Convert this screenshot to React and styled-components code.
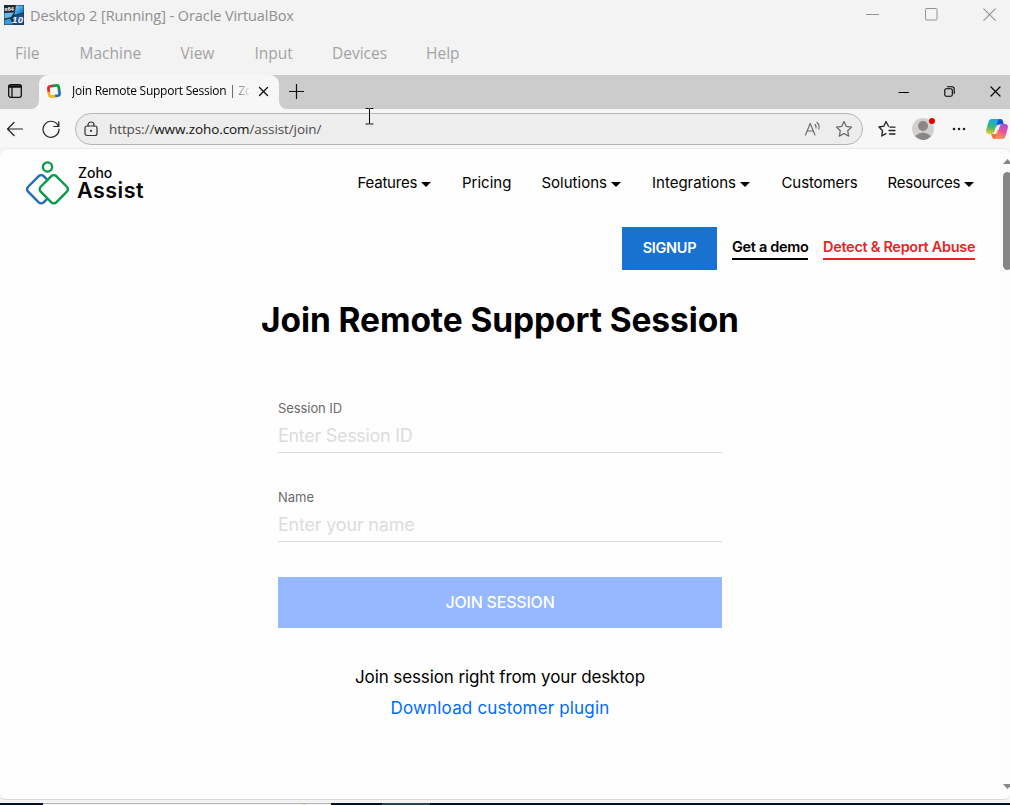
import React from "react";
import styled, { createGlobalStyle } from "styled-components";

const Global = createGlobalStyle`
  * { box-sizing: border-box; }
  body { margin: 0; overflow: hidden; background: #f3f3f3; }
`;
const ui = `"Open Sans", "Noto Sans", sans-serif`;
const Screen = styled.div`
  position: relative; width: 1010px; height: 805px; overflow: hidden;
  display: flex; flex-direction: column; background: #f3f3f3; font-family: ${ui};
  svg { display: block; flex: none; }
`;
const TitleBar = styled.header`
  display: flex; align-items: center; height: 31px; padding: 0 14px 1px 4px; gap: 6px;
`;
const Title = styled.span`
  flex: 1; font-size: 14.5px; line-height: 20px; color: #8f8f8f; white-space: nowrap;
  letter-spacing: ${(p) => p.$ls}px; padding-top: 2px;
`;
const WindowButtons = styled.div`
  display: flex; align-items: center; gap: ${(p) => p.$gap}px; padding-bottom: ${(p) => p.$lift || 0}px;
`;
const MenuBar = styled.nav`
  display: flex; height: 44px; padding: 0 0 0 15px; align-items: center;
`;
const MenuItem = styled.span`
  width: ${(p) => p.$w}px; font-size: 15.5px; color: #a3a3a3;
`;
const TabStrip = styled.div`
  display: flex; height: 34px; background: #cccccc; align-items: center;
`;
const LeftStrip = styled.div`height: 34px; background: #f7f7f7;`;
const TabMenu = styled.div`
  width: 39px; padding-left: 8px; height: 100%; display: flex; align-items: center;
  background: #ccc; border-bottom-right-radius: 8px; padding-bottom: 2px;
`;
const Tab = styled.div`
  width: 240px; height: 34px; background: #f7f7f7; border-radius: 9px 9px 0 0; display: flex; align-items: center;
  padding: 0 9px 2px 7px;
`;
const TabTitle = styled.span`
  width: 177px; margin: 0 9px 0 10px; overflow: hidden; white-space: nowrap; font-size: 12px; color: #000;
  letter-spacing: -0.25px; line-height: 20px;
  mask-image: linear-gradient(90deg, #000 86%, transparent 102%);
`;
const RestStrip = styled.div`flex: 1; height: 34px; background: #f7f7f7;`;
const Rest = styled.div`
  height: 34px; background: #ccc; border-bottom-left-radius: 8px; display: flex; align-items: center;
  justify-content: space-between; padding: 0 9px 1px 10px;
`;
const Toolbar = styled.div`
  display: flex; height: 39px; background: #f7f7f7; align-items: center; padding: 1px 0 0 6px; flex: none;
`;
const NavButtons = styled.div`display: flex; align-items: center; gap: 18px;`;
const Address = styled.div`
  display: flex; align-items: center; width: 788px; height: 32px; margin: 0 15px 0 15px; padding: 0 9px 0 8px;
  border: 1px solid #b5b5b5; border-radius: 16px; background: #ededed;
`;
const Url = styled.span`
  flex: 1; margin: 0 0 1px 11px; font-size: 13.5px; color: #4b4b4b; letter-spacing: ${(p) => p.$ls}px;
  b { font-weight: 400; color: #111; }
`;
const Actions = styled.div`display: flex; align-items: center; gap: ${(p) => p.$gap}px;`;
const Page = styled.main`
  display: flex; height: 652px; background: #fefefe; border-top: 1px solid #e9e9e9; border-bottom: 1px solid #d6d8d8;
  border-radius: 8px 8px 6px 6px; font-family: Inter, sans-serif; overflow: hidden; flex: none;
`;
const Content = styled.div`width: 1000px; height: 100%; display: flex; flex-direction: column; align-items: center;`;
const SiteHeader = styled.div`width: 100%; height: 67px; display: flex; padding: 11px 0 0 24px;`;
const Brand = styled.div`width: 333.5px; display: flex; gap: 7px;`;
const BrandText = styled.div`display: flex; flex-direction: column; color: #060606; padding-top: 5px;`;
const BrandSmall = styled.span`font-size: 14px; line-height: 15px; font-weight: 500; letter-spacing: 0; margin-left: 1px;`;
const BrandLarge = styled.span`font-size: 21.5px; line-height: 21px; font-weight: 600; letter-spacing: ${(p) => p.$ls}px;`;
const Nav = styled.nav`display: flex; padding-top: 13px;`;
const NavItem = styled.a`
  width: ${(p) => p.$w}px; display: flex; gap: 4px; font-size: 15px; line-height: 20px; color: #000; white-space: nowrap;
  letter-spacing: ${(p) => p.$ls}px;
`;
const Caret = styled.i`
  width: 0; height: 0; margin-top: 9px; border: 5px solid transparent; border-top-color: #000; border-bottom: 0;
`;
const Ctas = styled.div`width: 100%; padding: 11px 25px 0 0; display: flex; justify-content: flex-end; gap: 15px; height: 54px;`;
const Signup = styled.button`
  width: 95px; height: 43px; border: 0; background: #1971d0; color: #fff; font: 600 14.5px/20px Inter, sans-serif;
  letter-spacing: ${(p) => p.$ls}px; padding: 0 0 2px;
`;
const CtaLink = styled.a`
  width: ${(p) => p.$w}px; height: 33px; padding-top: 10px; color: ${(p) => p.$c}; border-bottom: 2px solid ${(p) => p.$c};
  font-size: 14.5px; line-height: 20px; font-weight: 600; letter-spacing: ${(p) => p.$ls}px; white-space: nowrap;
`;
const Heading = styled.h1`
  margin: 28px 0 58px; font-size: 33.5px; line-height: 44px; font-weight: 700; color: #000; white-space: nowrap;
  letter-spacing: ${(p) => p.$ls}px;
`;
const Field = styled.label`
  width: 444px; height: 53px; margin-bottom: 36px; display: flex; flex-direction: column; border-bottom: 1px solid #d9d9d9;
`;
const FieldLabel = styled.span`font-size: 13px; line-height: 16px; color: #6b6b6b; letter-spacing: ${(p) => p.$ls}px;`;
const Placeholder = styled.span`
  font-size: 18px; line-height: 24px; margin-top: 8px; color: #dcdcdc; letter-spacing: ${(p) => p.$ls}px;
`;
const Join = styled.button`
  width: 444px; height: 51px; margin: -1px 0 37px; border: 0; background: #95b8ff; color: #fff; padding: 0 0 1px;
  font: 500 16px/20px Inter, sans-serif; letter-spacing: ${(p) => p.$ls}px;
`;
const Note = styled.span`
  font-size: 17px; line-height: 24px; margin-bottom: 7px; color: ${(p) => p.$c}; letter-spacing: ${(p) => p.$ls}px;
`;
const Scroll = styled.div`
  width: 10px; flex: none; padding: 10px 0 10px 3px; background: #fcfcfc; display: flex; flex-direction: column; height: 100%;
  justify-content: space-between; overflow: hidden;
`;
const ScrollTop = styled.div`display: flex; flex-direction: column; gap: 8px;`;
const Thumb = styled.div`width: 9px; height: 98px; border-radius: 5px; background: #868686;`;
const Taskbar = styled.div`
  height: 2px; margin-top: 3px; display: flex; background: #02101d;
`;
const TaskPart = styled.span`width: ${(p) => p.$w}px; height: 2px; background: ${(p) => p.$c}; border-top: 1px solid ${(p) => p.$t || p.$c};`;
const Pointer = styled.div`position: absolute; left: 364px; top: 108px;`;

const Line = ({ w = 20, h = 20, c = "#222", s = 1.2, children }) => (
  <svg width={w} height={h} viewBox={`0 0 ${w} ${h}`} fill="none" stroke={c} strokeWidth={s} strokeLinecap="round" strokeLinejoin="round">{children}</svg>
);

const VmIcon = () => (
  <svg width="20" height="20" viewBox="0 0 20 20">
    <defs><linearGradient id="vm" x1="0" y1="0" x2="1" y2="1"><stop stopColor="#8fd8fa" /><stop offset=".5" stopColor="#3ba0e6" /><stop offset="1" stopColor="#155a9c" /></linearGradient></defs>
    <rect width="20" height="20" fill="#22303c" />
    <path d="M.5 8 10 7.500 7 12 .5 13.500Z" fill="#62bcef" />
    <path d="M12 .5h7.500v7L10.500 10Z" fill="url(#vm)" />
    <path d="M.5 15 6 13.500 9 19.500H.5Z" fill="#3a9adb" />
    <path d="M10.500 11l9-2.500V19.500H10.500L8 14Z" fill="#1c4f88" />
    <rect y=".5" width="10" height="6.500" fill="#20242a" />
    <text x="0.3" y="6" fontSize="6" fontWeight="700" fill="#fff" fontFamily="Liberation Sans, sans-serif" textLength="9.5">x64</text>
    <text x="8" y="17.500" fontSize="9.500" fontWeight="700" fontStyle="italic" fill="#fff" fontFamily="Liberation Sans, sans-serif" textLength="11">10</text>
  </svg>
);

const Copilot = () => (
  <svg width="22" height="20" viewBox="0 0 22 20">
    <defs>
      <linearGradient id="ca" x1="0.4" y1="0" x2="0.2" y2="1"><stop stopColor="#1ba7ee" /><stop offset=".5" stopColor="#35b878" /><stop offset="1" stopColor="#f3cb22" /></linearGradient>
      <linearGradient id="cb" x1="0.7" y1="0" x2="0.3" y2="1"><stop stopColor="#a64de8" /><stop offset=".5" stopColor="#ee5590" /><stop offset="1" stopColor="#ff9a57" /></linearGradient>
    </defs>
    <path d="M10 0h4.500c1.500 0 2 .8 2.400 2l1 3.500h-4.500c-2 0-2.500 1-3 2.500Z" fill="#1257d2" />
    <path d="M5 15h5l2-5.500-1 9c-.4 1-1 1.500-2.500 1.500-1.500 0-2-.8-2.400-2Z" fill="#f8763d" />
    <path d="M5.500 0H14c-1.500 0-2 1-2.500 2.500L8.500 12c-.6 2-1.300 3-3.300 3H3c-2.500 0-3.500-2-2.600-5L2.500 3C3.100 1 4 0 5.500 0Z" fill="url(#ca)" />
    <path d="M16.500 20H8c1.500 0 2-1 2.500-2.500l3-9.500c.6-2 1.300-3 3.300-3H19c2.500 0 3.500 2 2.600 5l-2.100 7c-.6 2-1.500 3-3 3Z" fill="url(#cb)" />
  </svg>
);

const nav = [["Features", 104.5, -0.22, 1], ["Pricing", 79.5, 0, 0], ["Solutions", 110.5, 0, 1], ["Integrations", 129.5, 0, 1], ["Customers", 106, -0.1, 0], ["Resources", 90, -0.2, 1]];

export default function App() {
  return (
    <Screen>
      <Global />
      <TitleBar>
        <VmIcon />
        <Title $ls={-0.08}>Desktop 2 [Running] - Oracle VirtualBox</Title>
        <WindowButtons $gap={45.5} $lift={1}>
          <Line w={13} h={13} c="#929292" s={1}><path d="M0.500 6.500h12" /></Line>
          <Line w={13} h={13} c="#929292" s={1}><rect x=".5" y=".5" width="11.500" height="11.500" rx="1" /></Line>
          <Line w={13} h={13} c="#929292" s={1.1}><path d="m.8.8 11.500 11.500M12.300.8.8 12.300" /></Line>
        </WindowButtons>
      </TitleBar>
      <MenuBar>
        <MenuItem $w={64.5}>File</MenuItem><MenuItem $w={101}>Machine</MenuItem><MenuItem $w={74}>View</MenuItem>
        <MenuItem $w={77.5}>Input</MenuItem><MenuItem $w={94}>Devices</MenuItem><MenuItem $w={60}>Help</MenuItem>
      </MenuBar>
      <TabStrip>
        <LeftStrip><TabMenu>
          <Line w={14} h={14} c="#111" s={1.3}><rect x=".7" y=".7" width="12.600" height="12.600" rx="2" /><path d="M1 1.800h12M1 3h12M4 4v9" /></Line>
        </TabMenu></LeftStrip>
        <Tab>
          <svg width="16" height="16" viewBox="-1 -1 16 16" fill="none" strokeWidth="2.700">
            <g transform="rotate(-8 7 7)">
              <path d="M1.800 7.500V4Q1.800 1.800 4 1.800H7" stroke="#e42527" />
              <path d="M6.500 1.800H10Q12.200 1.800 12.200 4V7" stroke="#089949" />
              <path d="M12.200 6.500V10Q12.200 12.200 10 12.200H7" stroke="#226db4" />
              <path d="M7.500 12.200H4Q1.800 12.200 1.800 10V7" stroke="#f9b21d" />
            </g>
          </svg>
          <TabTitle>Join Remote Support Session | Zoho</TabTitle>
          <Line w={11} h={11} c="#111" s={1.3}><path d="m1.500 1.500 8 8M9.500 1.500l-8 8" /></Line>
        </Tab>
        <RestStrip><Rest>
          <WindowButtons $gap={0} $lift={1}><Line w={15} h={15} c="#111"><path d="M7.500.5v14M.5 7.500h14" /></Line></WindowButtons>
          <WindowButtons $gap={35}>
            <Line w={11} h={11} c="#000" s={1}><path d="M1 6.500h9.500" /></Line>
            <Line w={11} h={11} c="#000" s={1.1}><rect x=".8" y="2.800" width="7.500" height="7.500" rx="1.500" /><path d="M3.500.8H8a2 2 0 0 1 2.200 2V7.500" /></Line>
            <Line w={11} h={11} c="#000" s={1.2}><path d="m1 1 9 9M10 1l-9 9" /></Line>
          </WindowButtons>
        </Rest></RestStrip>
      </TabStrip>
      <Toolbar>
        <NavButtons>
          <Line w={18} h={16}><path d="M16.500 8H1.500M8 1.500 1.500 8 8 14.500" /></Line>
          <Line w={18} h={18}><path d="M16.500 6.500A8 8 0 1 0 17 9M16.800 1.500v5h-5" /></Line>
        </NavButtons>
        <Address>
          <Line w={14} h={16} c="#333"><rect x="1" y="5" width="12" height="9.500" rx="2" /><path d="M4 5V4a3 3 0 0 1 6 0v1" /><circle cx="7" cy="9.800" r=".5" fill="#333" /></Line>
          <Url $ls={-0.1}>https://<b>www.zoho.com</b>/assist/join/</Url>
          <Actions $gap={14}>
            <Line w={17} h={16} c="#666" s={1.1}><path d="M1.500 14 6.200 2.500 11 14M3.200 10h6M11 3.500q1.500 1.500 1 3.500M13 1.500q3 2.800 1.700 6.500" /></Line>
            <Line w={18} h={18} c="#666" s={1.2}><path d="m9 1.500 2.300 4.900 5.300.7-3.900 3.700 1 5.300L9 13.500l-4.700 2.600 1-5.300L1.400 7.100l5.300-.7Z" /></Line>
          </Actions>
        </Address>
        <Line w={18} h={18} s={1.3}><path d="M10.500 6.200 8 1.500 5.900 6.200 1 7l3.600 3.700-.9 5.300L8 13.600M12 7.200h5M11 10.500h6M11.500 14H17" /></Line>
        <Actions $gap={16}>
          <svg width="40" height="26" viewBox="-15 0 40 26">
            <circle cx="12" cy="13" r="11" fill="#d2d0ce" /><circle cx="12" cy="10" r="5" fill="#8a8886" /><path d="M4 20q8-7 16 0-7 8-16 0" fill="#8a8886" /><circle cx="21" cy="5" r="3" fill="#e00000" />
          </svg>
          <svg width="18" height="4" viewBox="0 0 18 4" fill="#222"><circle cx="2" cy="2" r="1.300" /><circle cx="7" cy="2" r="1.300" /><circle cx="12" cy="2" r="1.300" /></svg>
          <Copilot />
        </Actions>
      </Toolbar>
      <Page>
        <Content>
          <SiteHeader>
            <Brand>
              <svg width="46" height="46" viewBox="0 0 46 46" fill="none" strokeWidth="2.400">
                <rect x="6.200" y="18.200" width="22" height="22" rx="3.500" transform="rotate(45 17.200 29.200)" stroke="#226db4" />
                <rect x="18.800" y="18.200" width="22" height="22" rx="3.500" transform="rotate(45 29.800 29.200)" stroke="#089949" fill="#fefefe" />
                <circle cx="23.500" cy="7" r="4.600" stroke="#089949" />
              </svg>
              <BrandText><BrandSmall>Zoho</BrandSmall><BrandLarge $ls={0.5}>Assist</BrandLarge></BrandText>
            </Brand>
            <Nav>{nav.map(([t, w, ls, c]) => <NavItem key={t} $w={w} $ls={ls}>{t}{c ? <Caret /> : null}</NavItem>)}</Nav>
          </SiteHeader>
          <Ctas>
            <Signup $ls={-0.3}>SIGNUP</Signup>
            <CtaLink $w={76} $c="#000" $ls={-0.33}>Get a demo</CtaLink>
            <CtaLink $w={152} $c="#e42527" $ls={-0.3}>Detect &amp; Report Abuse</CtaLink>
          </Ctas>
          <Heading $ls={-0.1}>Join Remote Support Session</Heading>
          <Field><FieldLabel $ls={-0.08}>Session ID</FieldLabel><Placeholder $ls={-0.3}>Enter Session ID</Placeholder></Field>
          <Field><FieldLabel $ls={0}>Name</FieldLabel><Placeholder $ls={-0.2}>Enter your name</Placeholder></Field>
          <Join $ls={-0.2}>JOIN SESSION</Join>
          <Note $c="#000" $ls={-0.11}>Join session right from your desktop</Note>
          <Note $c="#006aff" $ls={0.17}>Download customer plugin</Note>
        </Content>
        <Scroll>
          <ScrollTop>
            <svg width="9" height="5" viewBox="0 0 9 5"><path d="M0 5 4.500 0 9 5Z" fill="#868686" /></svg>
            <Thumb />
          </ScrollTop>
          <svg width="9" height="5" viewBox="0 0 9 5"><path d="M0 0h9L4.500 5Z" fill="#868686" /></svg>
        </Scroll>
      </Page>
      <Taskbar>
        <TaskPart $w={43} $c="#02101d" /><TaskPart $w={260} $c="#f4f4f4" $t="#b5b5b5" /><TaskPart $w={3} $c="#f3d5b5" $t="#b5b5b5" /><TaskPart $w={25} $c="#f4f4f4" $t="#b5b5b5" />
        <TaskPart $w={51} $c="#02101d" /><TaskPart $w={48} $c="#2f414b" />
      </Taskbar>
      <Pointer><Line w={10} h={17} c="#000" s={1}><path d="M2 .5h2.500l1 .7 1-.7H9M5.500 1v14.500M2 16h2.500l1-.7 1 .7H9" /></Line></Pointer>
    </Screen>
  );
}
